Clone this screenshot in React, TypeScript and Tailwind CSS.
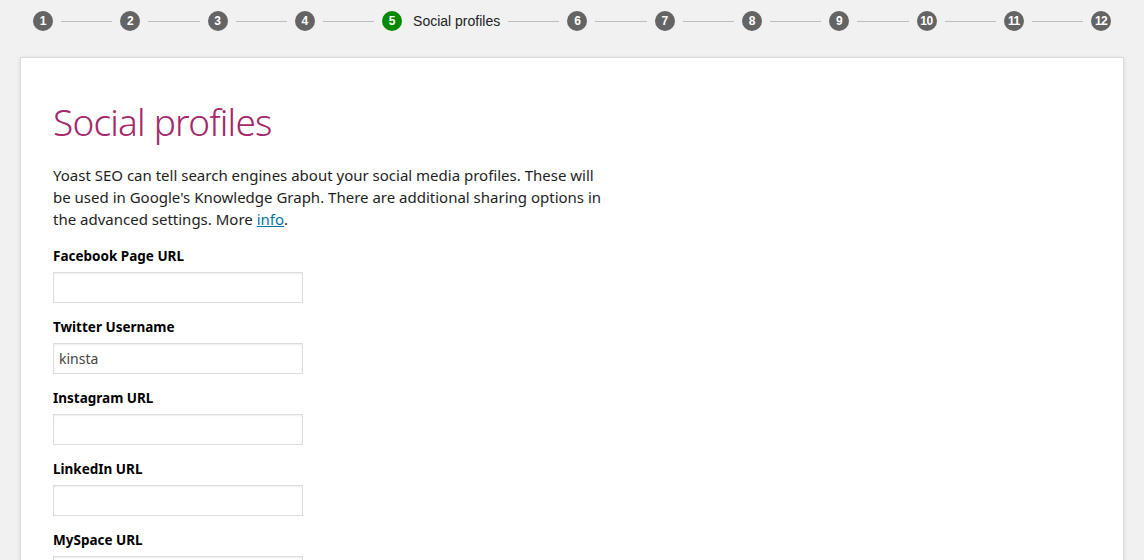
import React from "react";

const STEPS = ["1", "2", "3", "4", "5", "6", "7", "8", "9", "10", "11", "12"];
const ACTIVE = "5";

function Step({ num, label }: { num: string; label?: string }) {
  const active = num === ACTIVE;
  return (
    <div className="flex items-center px-2">
      <span
        className={`flex items-center justify-center w-5 h-5 rounded-full text-white text-[12px] font-bold ${
          active ? "bg-[#008a00]" : "bg-[#646464]"
        }`}
        style={{ letterSpacing: num.length > 1 ? "-0.5px" : undefined }}
      >
        {num}
      </span>
      {label && <span className="ml-[11px] text-[14px] text-[#222]">{label}</span>}
    </div>
  );
}

function Stepper() {
  return (
    <div className="flex items-center h-[42px] px-[25px] font-['Liberation_Sans',Arial,sans-serif]">
      {STEPS.map((n, i) => (
        <React.Fragment key={n}>
          {i > 0 && <div className="flex-1 h-px bg-[#bdbdbd]" />}
          <Step num={n} label={n === ACTIVE ? "Social profiles" : undefined} />
        </React.Fragment>
      ))}
    </div>
  );
}

function Field({ label, value }: { label: string; value?: string }) {
  return (
    <div className="mb-[14px]">
      <label className="block text-[13.5px] font-bold text-black leading-5 mb-[6px]">{label}</label>
      <input
        type="text"
        defaultValue={value}
        className="block w-[250px] h-[31px] border border-[#dddddd] px-[5px] text-[14px] text-[#444] outline-none shadow-[inset_0_1px_2px_rgba(0,0,0,0.07)]"
      />
    </div>
  );
}

export default function App() {
  return (
    <div className="w-[1144px] h-[560px] overflow-hidden bg-[#f1f1f1]">
      <Stepper />
      <div className="mx-5 mt-[15px] bg-white border border-[#dcdcdc] shadow-[0_1px_4px_rgba(0,0,0,0.12)] px-[32px] pt-[40px] pb-10 font-['Noto_Sans',sans-serif]">
        <h1 className="text-[37px] font-light leading-[48px] text-[#a4286a] tracking-[-0.8px]">Social profiles</h1>
        <p className="mt-[18px] text-[15px] leading-[22px] text-[#1e1e1e]">
          Yoast SEO can tell search engines about your social media profiles. These will
          <br />
          be used in Google's Knowledge Graph. There are additional sharing options in
          <br />
          the advanced settings. More{" "}
          <a href="#" className="text-[#0073aa] underline">
            info
          </a>
          .
        </p>
        <div className="mt-[16px]">
          <Field label="Facebook Page URL" />
          <Field label="Twitter Username" value="kinsta" />
          <Field label="Instagram URL" />
          <Field label="LinkedIn URL" />
          <Field label="MySpace URL" />
        </div>
      </div>
    </div>
  );
}
